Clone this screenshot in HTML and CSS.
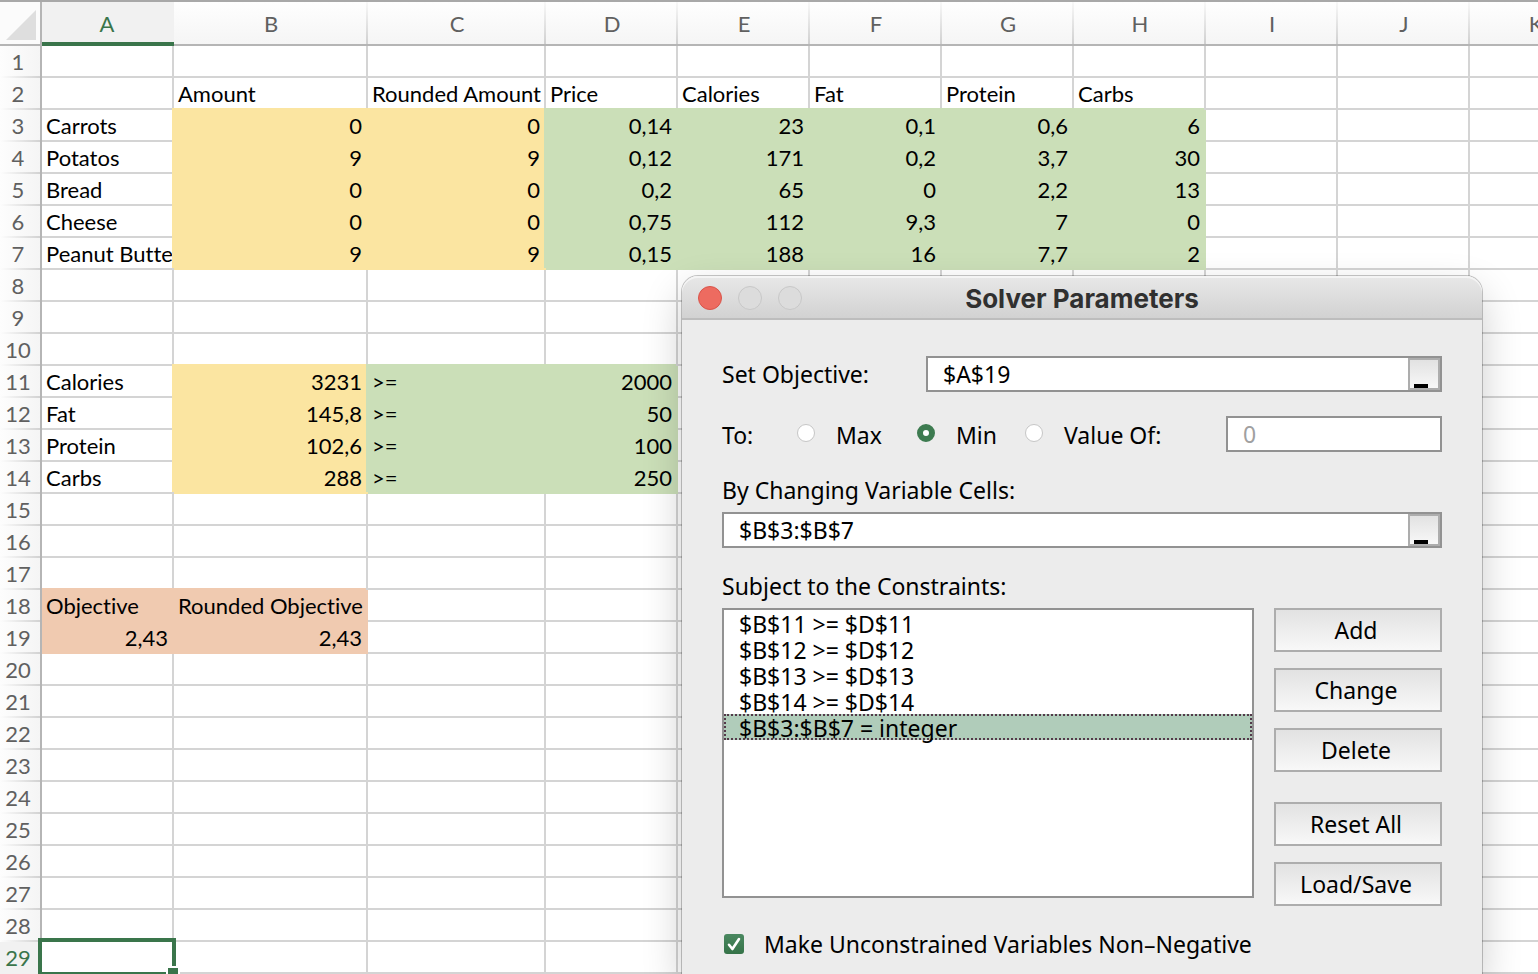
FILE: index.html
```html
<!DOCTYPE html>
<html lang="en">
<head>
<meta charset="utf-8">
<title>Solver Parameters</title>
<link rel="stylesheet" href="styles.css">
</head>
<body>
<main class="workbook">
<table class="sheet">
<colgroup><col class="col-index"><col class="col"><col class="col-b"><col class="col-c"><col class="col"><col class="col"><col class="col"><col class="col"><col class="col"><col class="col"><col class="col"><col class="col"></colgroup>
<thead>
<tr><th class="corner"><svg width="30" height="30" viewBox="0 0 30 30" aria-hidden="true"><path d="M30 0V30H0Z" fill="#dedede"/></svg></th><th class="current">A</th><th>B</th><th>C</th><th>D</th><th>E</th><th>F</th><th>G</th><th>H</th><th>I</th><th>J</th><th>K</th></tr>
</thead>
<tbody>
<tr><th>1</th><td></td><td></td><td></td><td></td><td></td><td></td><td></td><td></td><td></td><td></td><td></td></tr>
<tr><th>2</th><td></td><td>Amount</td><td>Rounded Amount</td><td>Price</td><td>Calories</td><td>Fat</td><td>Protein</td><td>Carbs</td><td></td><td></td><td></td></tr>
<tr><th>3</th><td>Carrots</td><td class="yellow num">0</td><td class="yellow num">0</td><td class="green num">0,14</td><td class="green num">23</td><td class="green num">0,1</td><td class="green num">0,6</td><td class="green num">6</td><td></td><td></td><td></td></tr>
<tr><th>4</th><td>Potatos</td><td class="yellow num">9</td><td class="yellow num">9</td><td class="green num">0,12</td><td class="green num">171</td><td class="green num">0,2</td><td class="green num">3,7</td><td class="green num">30</td><td></td><td></td><td></td></tr>
<tr><th>5</th><td>Bread</td><td class="yellow num">0</td><td class="yellow num">0</td><td class="green num">0,2</td><td class="green num">65</td><td class="green num">0</td><td class="green num">2,2</td><td class="green num">13</td><td></td><td></td><td></td></tr>
<tr><th>6</th><td>Cheese</td><td class="yellow num">0</td><td class="yellow num">0</td><td class="green num">0,75</td><td class="green num">112</td><td class="green num">9,3</td><td class="green num">7</td><td class="green num">0</td><td></td><td></td><td></td></tr>
<tr><th>7</th><td>Peanut Butter</td><td class="yellow num">9</td><td class="yellow num">9</td><td class="green num">0,15</td><td class="green num">188</td><td class="green num">16</td><td class="green num">7,7</td><td class="green num">2</td><td></td><td></td><td></td></tr>
<tr><th>8</th><td></td><td></td><td></td><td></td><td></td><td></td><td></td><td></td><td></td><td></td><td></td></tr>
<tr><th>9</th><td></td><td></td><td></td><td></td><td></td><td></td><td></td><td></td><td></td><td></td><td></td></tr>
<tr><th>10</th><td></td><td></td><td></td><td></td><td></td><td></td><td></td><td></td><td></td><td></td><td></td></tr>
<tr><th>11</th><td>Calories</td><td class="yellow num">3231</td><td class="green">&gt;=</td><td class="green num">2000</td><td></td><td></td><td></td><td></td><td></td><td></td><td></td></tr>
<tr><th>12</th><td>Fat</td><td class="yellow num">145,8</td><td class="green">&gt;=</td><td class="green num">50</td><td></td><td></td><td></td><td></td><td></td><td></td><td></td></tr>
<tr><th>13</th><td>Protein</td><td class="yellow num">102,6</td><td class="green">&gt;=</td><td class="green num">100</td><td></td><td></td><td></td><td></td><td></td><td></td><td></td></tr>
<tr><th>14</th><td>Carbs</td><td class="yellow num">288</td><td class="green">&gt;=</td><td class="green num">250</td><td></td><td></td><td></td><td></td><td></td><td></td><td></td></tr>
<tr><th>15</th><td></td><td></td><td></td><td></td><td></td><td></td><td></td><td></td><td></td><td></td><td></td></tr>
<tr><th>16</th><td></td><td></td><td></td><td></td><td></td><td></td><td></td><td></td><td></td><td></td><td></td></tr>
<tr><th>17</th><td></td><td></td><td></td><td></td><td></td><td></td><td></td><td></td><td></td><td></td><td></td></tr>
<tr><th>18</th><td class="orange first">Objective</td><td class="orange">Rounded Objective</td><td></td><td></td><td></td><td></td><td></td><td></td><td></td><td></td><td></td></tr>
<tr><th>19</th><td class="orange first num">2,43</td><td class="orange num">2,43</td><td></td><td></td><td></td><td></td><td></td><td></td><td></td><td></td><td></td></tr>
<tr><th>20</th><td></td><td></td><td></td><td></td><td></td><td></td><td></td><td></td><td></td><td></td><td></td></tr>
<tr><th>21</th><td></td><td></td><td></td><td></td><td></td><td></td><td></td><td></td><td></td><td></td><td></td></tr>
<tr><th>22</th><td></td><td></td><td></td><td></td><td></td><td></td><td></td><td></td><td></td><td></td><td></td></tr>
<tr><th>23</th><td></td><td></td><td></td><td></td><td></td><td></td><td></td><td></td><td></td><td></td><td></td></tr>
<tr><th>24</th><td></td><td></td><td></td><td></td><td></td><td></td><td></td><td></td><td></td><td></td><td></td></tr>
<tr><th>25</th><td></td><td></td><td></td><td></td><td></td><td></td><td></td><td></td><td></td><td></td><td></td></tr>
<tr><th>26</th><td></td><td></td><td></td><td></td><td></td><td></td><td></td><td></td><td></td><td></td><td></td></tr>
<tr><th>27</th><td></td><td></td><td></td><td></td><td></td><td></td><td></td><td></td><td></td><td></td><td></td></tr>
<tr><th>28</th><td></td><td></td><td></td><td></td><td></td><td></td><td></td><td></td><td></td><td></td><td></td></tr>
<tr><th class="current">29</th><td class="active"><span class="selection"></span><span class="handle"></span></td><td></td><td></td><td></td><td></td><td></td><td></td><td></td><td></td><td></td><td></td></tr>
</tbody>
</table>

<section class="dialog" role="dialog" aria-labelledby="dialog-title">
  <header class="titlebar">
    <div class="lights">
      <button class="light close" type="button" aria-label="Close"></button>
      <button class="light" type="button" aria-label="Minimize" disabled></button>
      <button class="light" type="button" aria-label="Zoom" disabled></button>
    </div>
    <h1 class="title" id="dialog-title">Solver Parameters</h1>
  </header>
  <form class="form">
    <div class="row">
      <label class="objective-label" for="objective">Set Objective:</label>
      <div class="field">
        <input class="text" id="objective" type="text" value="$A$19">
        <button class="picker" type="button" aria-label="Select objective cell"></button>
      </div>
    </div>
    <div class="row goal" role="radiogroup" aria-labelledby="goal-label">
      <span class="goal-label" id="goal-label">To:</span>
      <label class="option"><input class="radio" type="radio" name="goal">Max</label>
      <label class="option"><input class="radio" type="radio" name="goal" checked>Min</label>
      <label class="option"><input class="radio" type="radio" name="goal">Value Of:</label>
      <div class="field">
        <input class="text" type="text" value="0" aria-label="Target value" disabled>
      </div>
    </div>
    <div class="group">
      <label for="cells">By Changing Variable Cells:</label>
      <div class="field">
        <input class="text" id="cells" type="text" value="$B$3:$B$7">
        <button class="picker" type="button" aria-label="Select variable cells"></button>
      </div>
    </div>
    <div class="group">
      <span id="constraints-label">Subject to the Constraints:</span>
      <div class="constraints">
        <ul class="list" role="listbox" tabindex="0" aria-labelledby="constraints-label">
          <li class="item" role="option">$B$11 &gt;= $D$11</li>
          <li class="item" role="option">$B$12 &gt;= $D$12</li>
          <li class="item" role="option">$B$13 &gt;= $D$13</li>
          <li class="item" role="option">$B$14 &gt;= $D$14</li>
          <li class="item selected" role="option" aria-selected="true">$B$3:$B$7 = integer</li>
        </ul>
        <div class="actions">
          <button class="button" type="button">Add</button>
          <button class="button" type="button">Change</button>
          <button class="button" type="button">Delete</button>
          <button class="button reset" type="button">Reset All</button>
          <button class="button" type="button">Load/Save</button>
        </div>
      </div>
    </div>
    <label class="check"><input class="checkbox" type="checkbox" checked><svg class="tick" width="20" height="20" viewBox="0 0 20 20" aria-hidden="true"><path d="M5 10.8L8.4 15L15 5" fill="none" stroke="#fff" stroke-width="2.6" stroke-linecap="round" stroke-linejoin="round"/></svg>Make Unconstrained Variables Non–Negative</label>
  </form>
</section>
</main>
</body>
</html>
```
FILE: styles.css
```css
* {
  box-sizing: border-box;
}

body {
  margin: 0;
  background: #fff;
}

.workbook {
  position: relative;
  height: 100vh;
  overflow: hidden;
}

/* Sheet */

.sheet {
  width: 1602px;
  table-layout: fixed;
  border-collapse: separate;
  border-spacing: 0;
  border-top: 2px solid #a8a8a8;
  font: 22px/28px Lato, "Open Sans", sans-serif;
  font-variant-ligatures: none;
  color: #000;
}

.col-index { width: 42px; }
.col { width: 132px; }
.col-b { width: 194px; }
.col-c { width: 178px; }

.sheet th {
  padding: 0;
  font-weight: 400;
  color: #606060;
}

.sheet thead th {
  height: 44px;
  padding-top: 2px;
  border-bottom: 2px solid #b5b5b5;
  background:
    linear-gradient(#f8f8f8, #d0d0d0) right / 2px 100% no-repeat,
    linear-gradient(#fefefe, #f5f5f5);
}

.sheet thead .current {
  padding: 4px 2px 0 0;
  border-bottom: 4px solid #3a754b;
  background: #f1f1f1;
  color: #3a754b;
}

.sheet thead .corner {
  padding: 8px 4px 0 0;
  border-right: 2px solid #b5b5b5;
  background: #fbfbfb;
  text-align: right;
  vertical-align: top;
  line-height: 0;
}

.sheet tbody th {
  padding-right: 4px;
  border-right: 2px solid #b5b5b5;
  background:
    linear-gradient(90deg, #fdfdfd, #d2d2d2) bottom / 100% 2px no-repeat,
    linear-gradient(90deg, #fdfdfd, #f5f5f5);
}

.sheet tbody .current {
  background: #f1f1f1;
  color: #3a754b;
}

.sheet td {
  height: 32px;
  padding: 2px 4px 0;
  border-right: 2px solid #d4d4d4;
  border-bottom: 2px solid #d4d4d4;
  white-space: nowrap;
  overflow: hidden;
}

.sheet .num {
  text-align: right;
}

/* Filled cells also cover the grid lines above and to the left of them. */
.sheet .yellow {
  border-color: #fbe5a1;
  background: #fbe5a1;
  box-shadow: -2px -2px #fbe5a1;
}

.sheet .green {
  border-color: #cbdfb8;
  background: #cbdfb8;
  box-shadow: -2px -2px #cbdfb8;
}

.sheet .orange {
  border-color: #f0cab0;
  background: #f0cab0;
  box-shadow: -2px -2px #f0cab0;
}

.sheet .orange.first {
  box-shadow: 0 -2px #f0cab0;
}

.sheet .active {
  position: relative;
  overflow: visible;
}

.selection {
  position: absolute;
  inset: -4px;
  border: 4px solid #3a754b;
}

.handle {
  position: absolute;
  right: -8px;
  bottom: -8px;
  width: 14px;
  height: 14px;
  border: 2px solid #fff;
  background: #3a754b;
}

/* Dialog */

.dialog {
  position: absolute;
  top: 276px;
  left: 682px;
  bottom: 0;
  width: 800px;
  border-radius: 16px 16px 0 0;
  background: #ececec;
  box-shadow: 0 0 0 1px rgba(0, 0, 0, 0.22), 0 16px 40px rgba(0, 0, 0, 0.2);
  font: 23px/28px "Noto Sans", "Open Sans", sans-serif;
  color: #000;
}

.titlebar {
  display: grid;
  grid-template-columns: 1fr auto 1fr;
  align-items: center;
  height: 44px;
  padding: 2px 16px 0;
  border-bottom: 2px solid #bdbdbd;
  border-radius: 16px 16px 0 0;
  background: linear-gradient(#e8e8e8, #d2d2d2);
  box-shadow: inset 0 2px #f4f4f4;
}

.lights {
  display: flex;
  gap: 16px;
}

.light {
  width: 24px;
  height: 24px;
  padding: 0;
  border: 1px solid #c8c8c8;
  border-radius: 50%;
  background: #dcdcdc;
}

.light.close {
  border-color: #d9544a;
  background: #ed6b60;
}

.title {
  margin: 0;
  padding-top: 2px;
  font: 700 26px/32px Inter, sans-serif;
  color: #303030;
}

.form {
  display: flex;
  flex-direction: column;
  gap: 24px;
  padding: 36px 40px;
}

.row {
  display: flex;
  align-items: center;
}

.objective-label {
  width: 204px;
}

.group {
  display: flex;
  flex-direction: column;
  gap: 8px;
}

.field {
  display: flex;
  flex: 1;
  height: 36px;
  border: 2px solid #929292;
  background: #fff;
}

.group .field {
  flex: none;
}

.text {
  flex: 1;
  width: 100%;
  min-width: 0;
  padding: 0 15px;
  border: 0;
  background: none;
  font: inherit;
  color: inherit;
}

.text:disabled {
  color: #a0a0a0;
}

.picker {
  display: flex;
  align-items: flex-end;
  width: 32px;
  padding: 0 4px;
  border: 2px solid #adadad;
  background: linear-gradient(#e2e2e2, #f8f8f8);
}

.picker::before {
  content: "";
  width: 14px;
  height: 4px;
  background: #000;
}

.goal {
  display: grid;
  grid-template-columns: 74px 120px 108px 202px minmax(0, 1fr);
}

.goal-label,
.option {
  padding-top: 2px;
}

.option {
  display: flex;
  align-items: center;
  gap: 20px;
}

.radio {
  appearance: none;
  width: 18px;
  height: 18px;
  margin: 0 1px 4px;
  border: 1px solid #c6c6c6;
  border-radius: 50%;
  background: #fff;
}

.radio:checked {
  border: 6px solid #3d7b50;
}

.constraints {
  display: flex;
  gap: 20px;
}

.list {
  flex: 1;
  height: 290px;
  margin: 0;
  padding: 0;
  border: 2px solid #929292;
  background: #fff;
  list-style: none;
}

.item {
  height: 26px;
  padding: 2px 15px 0;
  line-height: 24px;
}

.item.selected {
  padding: 0 13px;
  border: 2px dotted #54394a;
  background: #b0ccba;
}

.actions {
  display: flex;
  flex-direction: column;
  gap: 16px;
  width: 168px;
}

.button {
  height: 44px;
  padding: 0 4px 0 0;
  border: 2px solid #adadad;
  background: linear-gradient(#e2e2e2, #f8f8f8);
  font: inherit;
  color: inherit;
}

.reset {
  margin-top: 14px;
}

.check {
  display: flex;
  align-items: center;
  position: relative;
  gap: 20px;
  padding-left: 2px;
}

.checkbox {
  appearance: none;
  width: 20px;
  height: 20px;
  margin: 0;
  border-radius: 3px;
  background: linear-gradient(#4a8860, #357348);
}

.tick {
  position: absolute;
  left: 2px;
}
```
